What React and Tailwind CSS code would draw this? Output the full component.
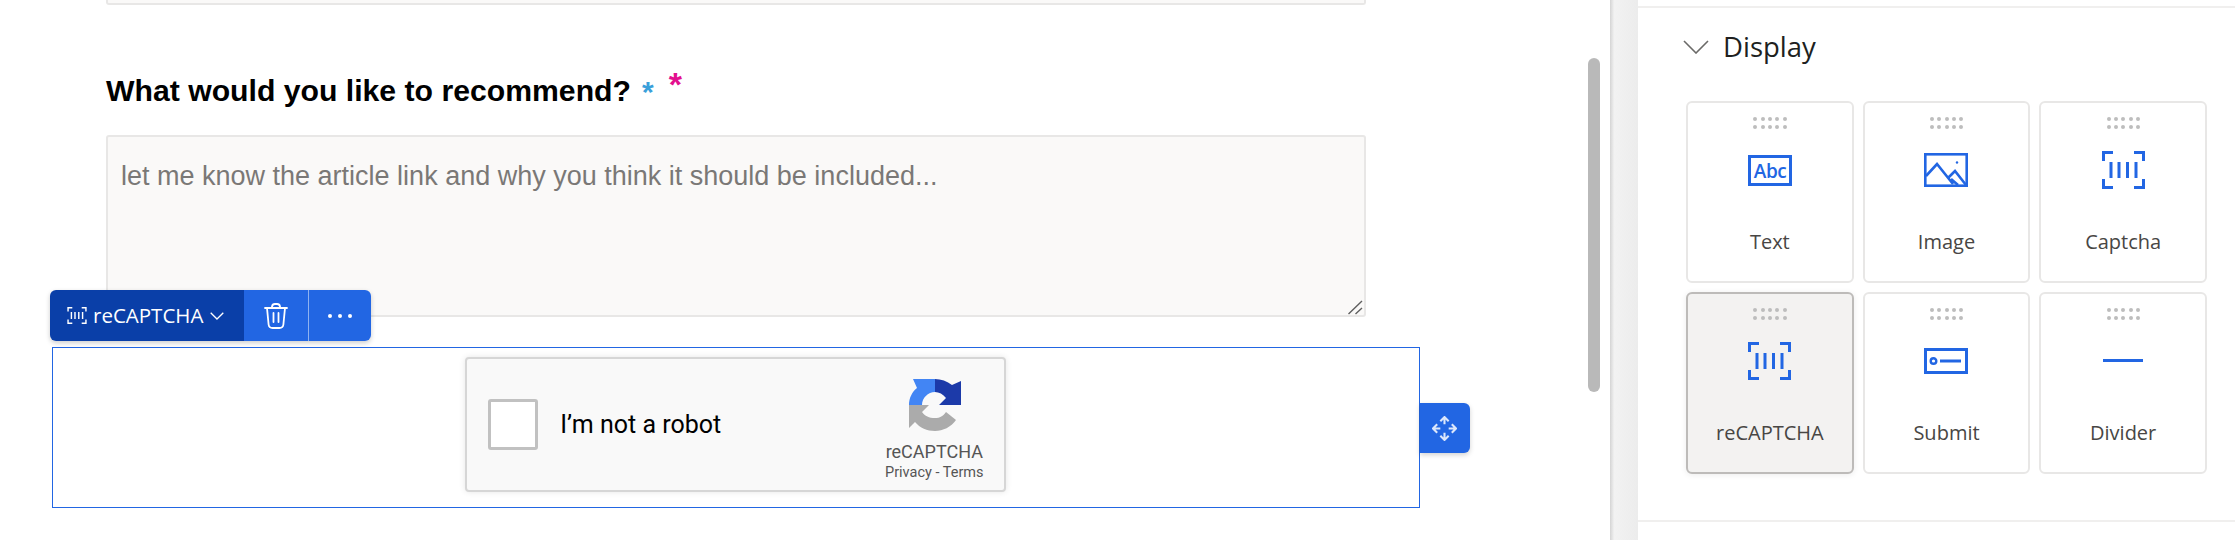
import React from "react";

const CaptchaIcon = ({ className, width = 3 }) => (
  <svg viewBox="0 0 43 38" className={className} fill="none" stroke="currentColor" strokeWidth={width}>
    <path d="M11 1.5H1.5V10M32 1.5h9.5V10M1.5 28v8.5H11M41.5 28v8.5H32" />
    <path d="M9 11v16M17 11v16M25.5 11v16M34 11v16" />
  </svg>
);

const AbcIcon = () => (
  <svg viewBox="0 0 44 31" className="w-[44px] h-[31px] text-[#2266e3]">
    <rect x="1.500" y="1.500" width="41" height="28" fill="none" stroke="currentColor" strokeWidth="3" />
    <text x="22" y="23" textAnchor="middle" fontSize="19" fontWeight="600" fontFamily="'Open Sans', sans-serif" fill="currentColor" letterSpacing="-0.5">Abc</text>
  </svg>
);

const ImageIcon = () => (
  <svg viewBox="0 0 44 34" className="w-[44px] h-[34px] text-[#2266e3]" fill="none" stroke="currentColor" strokeWidth="2.600">
    <rect x="1.300" y="1.300" width="41.400" height="31.400" />
    <path d="M2 23 13 11l16 20M25 24l6-6 11 14M27 26l7 6" />
    <circle cx="33" cy="9.500" r="1.200" fill="currentColor" stroke="none" />
  </svg>
);

const SubmitIcon = () => (
  <svg viewBox="0 0 44 26" className="w-[44px] h-[26px] text-[#2266e3]" fill="none" stroke="currentColor" strokeWidth="3">
    <rect x="1.500" y="1.500" width="41" height="23" />
    <circle cx="9.500" cy="13" r="2.800" strokeWidth="2.400" />
    <path d="M16 13h21" />
  </svg>
);

const DividerIcon = () => <div className="w-[40px] h-[3px] bg-[#2266e3] -mt-[2px]" />;

const Grip = () => (
  <div className="grid grid-cols-5 gap-x-[3.5px] gap-y-[4px] w-[33px] h-3">
    {Array.from({ length: 10 }).map((_, i) => (
      <span key={i} className="w-[4px] h-[4px] rounded-full bg-[#bdbdbd]" />
    ))}
  </div>
);

const items = [
  { label: "Text", icon: <AbcIcon /> },
  { label: "Image", icon: <ImageIcon /> },
  { label: "Captcha", icon: <CaptchaIcon className="w-[43px] h-[38px] text-[#2266e3]" /> },
  { label: "reCAPTCHA", icon: <CaptchaIcon className="w-[43px] h-[38px] text-[#2266e3]" />, active: true },
  { label: "Submit", icon: <SubmitIcon /> },
  { label: "Divider", icon: <DividerIcon /> },
];

const ToolCard = ({ label, icon, active }) => (
  <div
    className={`h-[182px] rounded-[6px] border-2 flex flex-col items-center pt-[14px] ${
      active
        ? "bg-[#f3f2f1] border-[#bdbbb9] shadow-[0_1px_6px_rgba(0,0,0,0.08)]"
        : "bg-white border-[#e8e7e6]"
    }`}
  >
    <Grip />
    <div className="mt-[1px] h-[80px] flex items-center justify-center">{icon}</div>
    <div className="mt-5 text-[20px] leading-6 text-[#484644]">{label}</div>
  </div>
);

const RecaptchaLogo = () => (
  <svg viewBox="0 0 53 54" className="w-[53px] h-[54px]">
    <path d="M1 27C1 20 4 14 9 10L5 1H27V14C20 14 14 20 14 27Z" fill="#4285f4" />
    <path d="M27 1C33 1 39 3 44 7L53 3V27H31L38 20C35 16 31 14 27 14Z" fill="#1c3aa9" />
    <path d="M1 27H21L14 34C17 38 21 40 27 40C32 40 35 38 38 34L48 42C43 49 35 53 27 53C19 53 12 50 7 44L1 50Z" fill="#ababab" />
  </svg>
);

const Recaptcha = () => (
  <div className="w-[541px] h-[135px] mx-auto bg-[#f9f9f9] border-2 border-[#d6d6d6] rounded-[4px] shadow-[0_0_6px_rgba(0,0,0,0.1)] flex items-center font-['Roboto',sans-serif]">
    <div className="ml-[21px] w-[50px] h-[51px] bg-white border-[3px] border-[#c1c1c1] rounded-[3px]" />
    <div className="ml-[22px] text-[25px] text-black">I’m not a robot</div>
    <div className="ml-auto mr-[15px] w-[110px] flex flex-col items-center pt-[10px]">
      <RecaptchaLogo />
      <div className="mt-[8px] text-[18px] leading-[24px] text-[#555]">reCAPTCHA</div>
      <div className="text-[14.5px] leading-[18px] text-[#555] whitespace-nowrap">Privacy - Terms</div>
    </div>
  </div>
);

const Toolbar = () => (
  <div className="absolute -top-[58px] -left-[3px] h-[51px] flex rounded-[6px] overflow-hidden shadow-[0_2px_5px_rgba(0,0,0,0.2)] text-white font-['Open_Sans',sans-serif]">
    <div className="w-[194px] bg-[#0a3fa8] flex items-center pl-[17px]">
      <CaptchaIcon className="w-[20px] h-[17px]" width={3.2} />
      <span className="ml-[6px] text-[20.5px] leading-none">reCAPTCHA</span>
      <svg viewBox="0 0 14 8" className="ml-[7px] w-[14px] h-[8px]" fill="none" stroke="currentColor" strokeWidth="1.300">
        <path d="M.7.7 7 7 13.300.7" />
      </svg>
    </div>
    <div className="w-[65px] bg-[#2266e3] flex items-center justify-center border-r border-[#8fb2f0]">
      <svg viewBox="0 0 24 26" className="w-[24px] h-[26px]" fill="none" stroke="currentColor" strokeWidth="1.800" strokeLinecap="round">
        <path d="M1 5h22M8 5V3.500a3 3 0 0 1 3-2.500h2a3 3 0 0 1 3 2.500V5" />
        <path d="M3 5l1.600 16.500a4 4 0 0 0 4 3.500h6.800a4 4 0 0 0 4-3.500L21 5" />
        <path d="M9.500 10v9M14.500 10v9" />
      </svg>
    </div>
    <div className="w-[62px] bg-[#2266e3] flex items-center justify-center gap-[6px]">
      <span className="w-[4px] h-[4px] rounded-full bg-white" />
      <span className="w-[4px] h-[4px] rounded-full bg-white" />
      <span className="w-[4px] h-[4px] rounded-full bg-white" />
    </div>
  </div>
);

const MoveHandle = () => (
  <div className="absolute left-full top-[55px] ml-[1px] w-[50px] h-[50px] bg-[#2266e3] rounded-r-[6px] shadow-[0_2px_5px_rgba(0,0,0,0.18)] flex items-center justify-center">
    <svg viewBox="0 0 24 24" className="w-[25px] h-[25px] text-[#dce7fb]" fill="none" stroke="currentColor" strokeWidth="2">
      <path d="M12 8V1.500M8 5l4-4 4 4" />
      <path d="M12 16v6.500M8 19l4 4 4-4" />
      <path d="M8 12H1.500M5 8l-4 4 4 4" />
      <path d="M16 12h6.500M19 8l4 4-4 4" />
    </svg>
  </div>
);

const Canvas = () => (
  <div className="relative w-[1610px] h-full overflow-hidden">
    <div className="pl-[106px] w-[1366px]">
      <div className="h-[5px] bg-[#faf9f8] border-x-2 border-b-2 border-[#e8e7e6] rounded-b-[3px]" />
      <div className="mt-[66px] h-[39px] flex items-center font-['Liberation_Sans',sans-serif] font-bold">
        <span className="text-[30.2px] text-black">What would you like to recommend?</span>
        <span className="ml-[11px] text-[30px] text-[#3aa0da] leading-none mt-[2px]">*</span>
        <span className="ml-[15px] text-[34px] text-[#e3108f] leading-none -mt-[14px]">*</span>
      </div>
      <div className="relative mt-[25px]">
        <textarea
          readOnly
          placeholder="let me know the article link and why you think it should be included..."
          className="block w-full h-[182px] px-[13px] pt-[21px] bg-[#faf9f8] border-2 border-[#e8e7e6] rounded-[3px] resize-none font-['Liberation_Sans',sans-serif] text-[27px] leading-[36px] placeholder:text-[#7a7876] outline-none"
        />
        {/* resize grip */}
        <svg viewBox="0 0 16 15" className="absolute right-[3px] bottom-[2px] w-[16px] h-[15px] text-[#5f5f5f] pointer-events-none" fill="none" stroke="currentColor" strokeWidth="1.400">
          <path d="M1.500 14 15 1M8.500 14 15 8" />
        </svg>
      </div>
    </div>
    <div className="relative ml-[52px] mt-[30px] w-[1367.5px] h-[161px] border border-[#2266e3] pt-[9px]">
      <Recaptcha />
      <Toolbar />
      <MoveHandle />
    </div>
    {/* overlay scrollbar */}
    <div className="absolute top-[58px] left-[1588px] w-[12px] h-[334px] rounded-full bg-[#b9b9b9]" />
  </div>
);

const Panel = () => (
  <div className="flex-1 h-full font-['Open_Sans',sans-serif]">
    <div className="h-[8px] border-b-2 border-[#f0efee]" />
    <div className="pt-[23px] pl-[45px] h-[93px] flex items-start">
      <svg viewBox="0 0 26 14" className="mt-[9px] w-[26px] h-[14px] text-[#6b6a68]" fill="none" stroke="currentColor" strokeWidth="1.600">
        <path d="M1 1l12 12L25 1" />
      </svg>
      <span className="ml-[14px] text-[27.500px] leading-[32px] text-[#201f1e]">Display</span>
    </div>
    <div className="ml-[48px] w-[521px] grid grid-cols-3 gap-x-[9px] gap-y-[9px]">
      {items.map((item) => (
        <ToolCard key={item.label} {...item} />
      ))}
    </div>
    <div className="mt-[46px] border-t-2 border-[#f0efee]" />
  </div>
);

const App = () => {
  return (
    <div className="w-[2235px] h-[540px] flex bg-white overflow-hidden">
      <Canvas />
      <div className="w-[28px] h-full bg-gradient-to-r from-[#d4d4d4] via-[#f2f2f2] via-15% to-[#ececec]" />
      <Panel />
    </div>
  );
};

export default App;
